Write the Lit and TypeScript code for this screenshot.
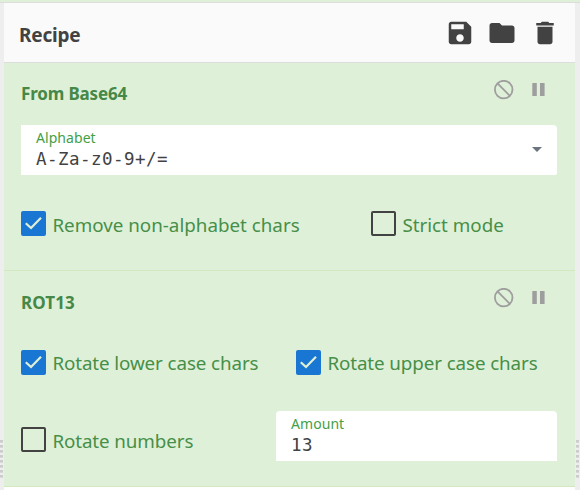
import { LitElement, html, css, svg, nothing } from "lit";
import { customElement, property } from "lit/decorators.js";

const icons = {
  save: svg`<path d="M17 3H5c-1.11 0-2 .9-2 2v14c0 1.1.89 2 2 2h14c1.1 0 2-.9 2-2V7l-4-4zm-5 16c-1.66 0-3-1.34-3-3s1.34-3 3-3 3 1.34 3 3-1.34 3-3 3zm3-10H5V5h10v4z"/>`,
  folder: svg`<path d="M10 4H4c-1.1 0-1.99.9-1.99 2L2 18c0 1.1.9 2 2 2h16c1.1 0 2-.9 2-2V8c0-1.1-.9-2-2-2h-8l-2-2z"/>`,
  delete: svg`<path d="M6 19c0 1.1.9 2 2 2h8c1.1 0 2-.9 2-2V7H6v12zM19 4h-3.5l-1-1h-5l-1 1H5v2h14V4z"/>`,
};

@customElement("recipe-checkbox")
export class RecipeCheckbox extends LitElement {
  @property({ type: Boolean }) checked = false;
  static styles = css`
    :host { display: flex; align-items: center; height: 25px; white-space: nowrap; }
    .box { box-sizing: border-box; width: 25px; height: 25px; border: 2px solid #424242; border-radius: 2px; flex: none; }
    .box.on { border: 0; background: #1976d2; }
    svg { display: block; }
    .label { margin-left: 6.4px; line-height: 24px; padding-top: var(--label-drop, 3px); color: #468f48; font-size: 18.8px; letter-spacing: var(--track, 0); }
  `;
  render() {
    return html`<span class="box ${this.checked ? "on" : ""}">${this.checked
      ? html`<svg width="25" height="25" viewBox="0 0 25 25"><path d="M4.8 12.2L10 17L20 6.8" fill="none" stroke="#dff0d8" stroke-width="2.2"/></svg>`
      : nothing}</span><span class="label"><slot></slot></span>`;
  }
}

@customElement("recipe-operation")
export class RecipeOperation extends LitElement {
  @property() name = "";
  static styles = css`
    :host { display: flex; flex-direction: column; box-sizing: border-box; background: #dff0d8; border-bottom: 1px solid #d3e8c0; padding: 0 18px 0 17px; }
    .top { display: flex; height: 62px; }
    .title { flex: 1; font-size: 17px; font-weight: 700; line-height: 24px; padding-top: var(--title-drop, 19px); color: #468847; letter-spacing: var(--title-track, 0); }
    .disable { margin: 17px 18px 0 0; width: 20px; height: 20px; }
    .pause { margin: 20px 12px 0 0; width: 13px; height: 13px; }
    svg { display: block; }
  `;
  render() {
    return html`
      <div class="top">
        <div class="title">${this.name}</div>
        <svg class="disable" viewBox="0 0 20 20" fill="none" stroke="#9e9e9e" stroke-width="1.8"><circle cx="9.7" cy="9.6" r="8.8"/><path d="M3.5 3.4L15.9 15.8"/></svg>
        <svg class="pause" viewBox="0 0 13 13" fill="#9e9e9e"><path d="M0.3 0h4.5v13H0.3zM8 0h4.6v13H8z"/></svg>
      </div>
      <slot></slot>`;
  }
}

@customElement("recipe-field")
export class RecipeField extends LitElement {
  @property() label = "";
  @property() value = "";
  @property({ type: Boolean, reflect: true }) menu = false;
  static styles = css`
    :host { display: flex; align-items: center; box-sizing: border-box; height: 50px; background: #fff; border-radius: 4px 4px 0 0; padding: 0 15px; }
    :host([menu]) { border-radius: 0 4px 2px 0; }
    .text { flex: 1; height: 50px; }
    .label { font-size: 14px; line-height: 18px; padding-top: 4px; color: #43a047; letter-spacing: .06px; }
    .value { font: 17.5px/24px "DejaVu Sans Mono", monospace; letter-spacing: .46px; color: #424242; }
    svg { display: block; margin-bottom: 1px; }
  `;
  render() {
    return html`<div class="text"><div class="label">${this.label}</div><div class="value">${this.value}</div></div>
      ${this.menu ? html`<svg width="10" height="5" viewBox="0 0 10 5"><path d="M0 0h10L5 5z" fill="#6c757d"/></svg>` : nothing}`;
  }
}

@customElement("app-root")
export class AppRoot extends LitElement {
  static styles = css`
    :host { display: block; height: 490px; overflow: hidden; background: #fff; font-family: "Noto Sans", "Open Sans", sans-serif; }
    .strip { height: 2px; background: #dff0d8; border-bottom: 1px solid #ddd; }
    .body { display: grid; grid-template-columns: 4px 571px 5px; height: 487px; }
    .gutter { background: #eee; padding-top: 437px; box-sizing: border-box; }
    .grip { width: 3px; height: 38px; background: repeating-linear-gradient(#ccc 0 2px, #d8d8d8 2px 3px, #eee 3px 5px); }
    .right .grip { margin-left: 1px; }
    header { display: flex; box-sizing: border-box; height: 60px; background: #fafafa; border-bottom: 1px solid #ddd; padding-left: 15px; }
    .heading { flex: 1; font-size: 19px; font-weight: 700; line-height: 26px; padding-top: 19px; color: #424242; letter-spacing: -.2px; }
    .actions { display: grid; grid-template-columns: 42px 43px 30px; padding: 15px 15px 0 0; }
    .actions svg { display: block; width: 30px; height: 30px; fill: #424242; }
    .base64 { height: 208px; --title-track: -.16px; --label-drop: 2px; }
    .rot13 { height: 216px; --title-track: .1px; --title-drop: 20px; --track: -.1px; }
    .row { display: grid; }
    .flags { grid-template-columns: 350px 1fr; margin-top: 36px; }
    .cases { grid-template-columns: 275px 1fr; margin-top: 17px; --label-drop: 1px; }
    .numbers { grid-template-columns: 255px 1fr; margin-top: 36px; }
    .numbers recipe-checkbox { margin-top: 16px; }
  `;
  render() {
    return html`
      <div class="strip"></div>
      <div class="body">
        <div class="gutter"><div class="grip"></div></div>
        <main>
          <header>
            <div class="heading">Recipe</div>
            <div class="actions">
              ${[icons.save, icons.folder, icons.delete].map((i) => html`<svg viewBox="0 0 24 24">${i}</svg>`)}
            </div>
          </header>
          <recipe-operation class="base64" name="From Base64">
            <recipe-field menu label="Alphabet" value="A-Za-z0-9+/="></recipe-field>
            <div class="row flags">
              <recipe-checkbox checked>Remove non-alphabet chars</recipe-checkbox>
              <recipe-checkbox>Strict mode</recipe-checkbox>
            </div>
          </recipe-operation>
          <recipe-operation class="rot13" name="ROT13">
            <div class="row cases">
              <recipe-checkbox checked>Rotate lower case chars</recipe-checkbox>
              <recipe-checkbox checked>Rotate upper case chars</recipe-checkbox>
            </div>
            <div class="row numbers">
              <recipe-checkbox>Rotate numbers</recipe-checkbox>
              <recipe-field label="Amount" value="13"></recipe-field>
            </div>
          </recipe-operation>
        </main>
        <div class="gutter right"><div class="grip"></div></div>
      </div>`;
  }
}
